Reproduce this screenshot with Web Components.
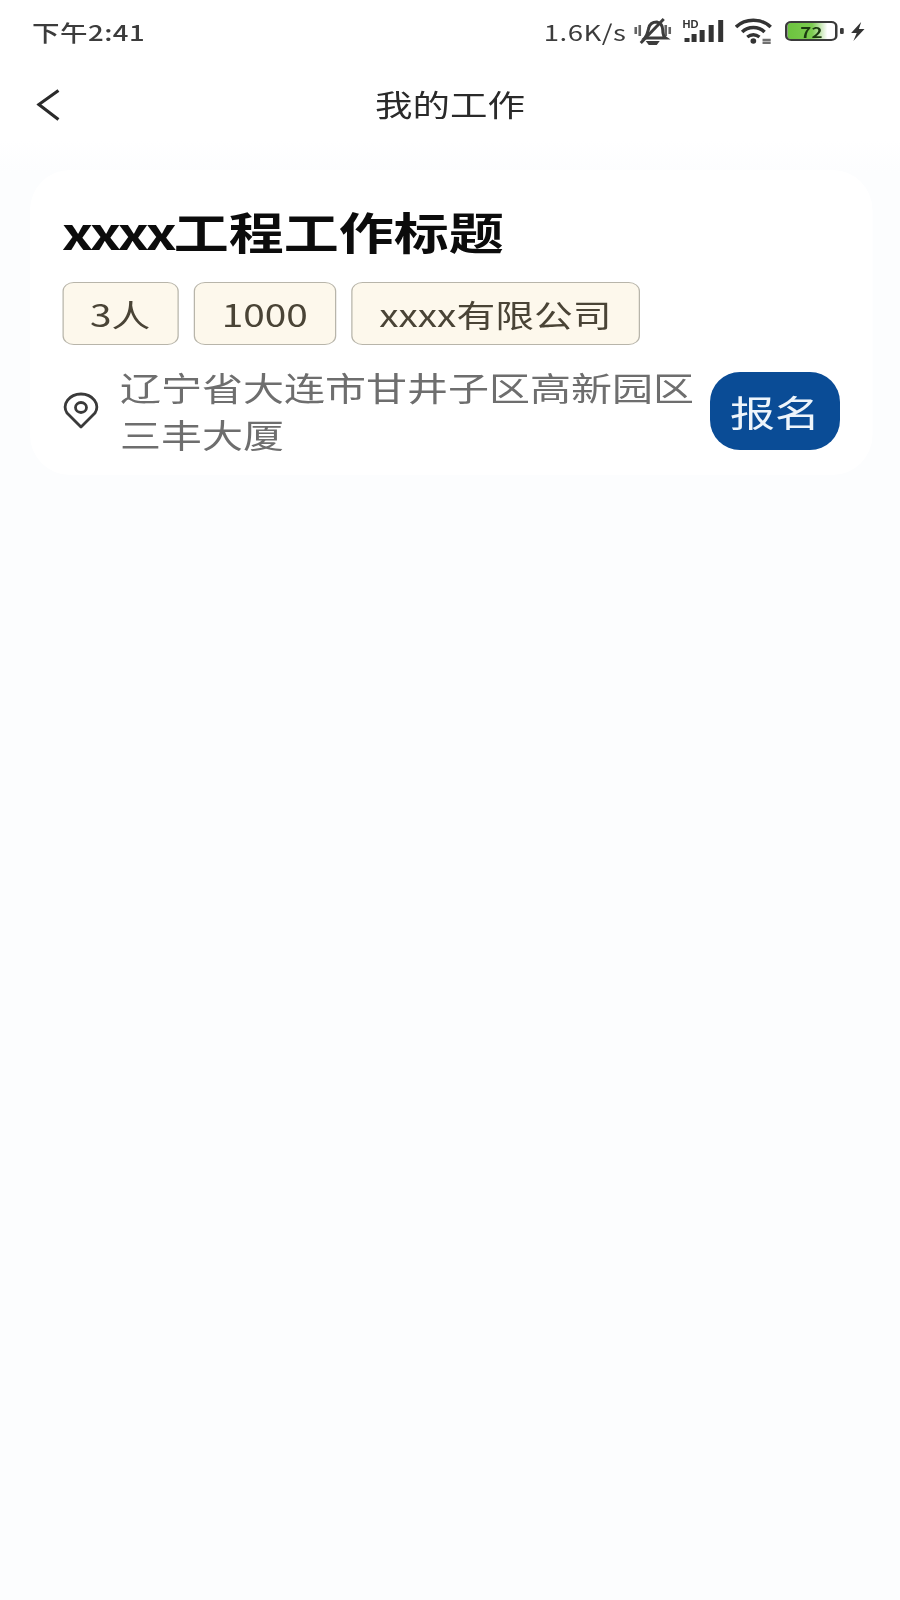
<!DOCTYPE html>
<html lang="zh">
<head>
<meta charset="utf-8">
<title>我的工作</title>
<style>
html, body { margin: 0; padding: 0; background: #fcfdfe; overflow: hidden; }
body { font-family: "Noto Sans CJK SC", "Noto Sans", sans-serif; }
</style>
</head>
<body>
<app-page>
    <status-bar></status-bar>
    <nav-bar>我的工作</nav-bar>
    <job-card address="辽宁省大连市甘井子区高新园区三丰大厦" action="报名">
        <span slot="title"><span style="letter-spacing:-2.4px">xxxx</span>工程工作标题</span>
        <job-tag>3人</job-tag>
        <job-tag>1000</job-tag>
        <job-tag>xxxx有限公司</job-tag>
    </job-card>
</app-page>

<script>
// the capture is stretched sideways and soft, so the page is laid out 720 wide and scaled to 900
class AppPage extends HTMLElement {
    constructor(){
        super();
        this.attachShadow({mode:'open'});
        this.shadowRoot.innerHTML = `
        <style>
        :host{
            display: block;
            width: 720px;
            height: 1600px;
            transform: scaleX(1.25);
            transform-origin: 0 0;
            filter: blur(.45px);
            background: linear-gradient(#fff 140px, #fcfdfe 172px);
        }
        </style>
        <slot></slot>`;
    }
}

class StatusBar extends HTMLElement {
    constructor(){
        super();
        this.attachShadow({mode:'open'});
        this.shadowRoot.innerHTML = `
        <style>
        :host{
            display: flex;
            align-items: center;
            justify-content: space-between;
            height: 61px;
            padding: 0 28px 0 25.6px;
            box-sizing: border-box;
            color: #3c3c3c;
            font-size: 22px;
        }
        .time{ font-weight: 500; letter-spacing: .4px; }
        .right{ display: flex; align-items: center; }
        .speed{ font-size: 22px; margin-right: 6px; letter-spacing: .4px; }
        svg{ display: block; flex: none; }
        .battery{
            box-sizing: border-box;
            width: 42px;
            height: 20px;
            border: 2.5px solid #3a3a3a;
            border-radius: 5px;
            margin: 1px 0 0 9.6px;
            display: flex;
            align-items: center;
            justify-content: center;
            font-size: 15px;
            line-height: 15px;
            font-weight: 700;
            color: #1c3a10;
            background: linear-gradient(90deg, #6cc43e 0, #7ccb50 52%, #d8eecb 74%, #fff 84%) content-box;
        }
        .nub{ width: 2.4px; height: 6px; background: #3a3a3a; margin: 1px 0 0 2px; border-radius: 1px; }
        </style>
        <span class="time">下午2:41</span>
        <div class="right">
            <span class="speed">1.6K/s</span>
            <svg width="30.4" height="28" viewBox="0 0 38 28" preserveAspectRatio="none" fill="none" stroke="#3c3c3c" stroke-width="3">
                <path d="M2 10v7M6 8v11M32 8v11M36 10v7" stroke-width="2.6" opacity=".8"/>
                <path d="M11 21c3-3 3-7 4-10 1-4 4-6 8-6 4 1 6 4 6 8 0 3 0 6 3 8z"/>
                <path d="M7 26 30 2"/>
                <path d="M12 24h14l-3 4h-8z" fill="#3c3c3c" stroke="none"/>
            </svg>
            <svg style="margin-left:8px" width="33" height="24" viewBox="0 0 41 24" preserveAspectRatio="none" fill="#333">
                <text x="0" y="9" font-family="Liberation Sans" font-size="11" font-weight="700">HD</text>
                <rect x="2" y="19" width="5" height="4"/>
                <rect x="9" y="15" width="5" height="8"/>
                <rect x="17" y="11" width="5" height="12"/>
                <rect x="26" y="6" width="5" height="17"/>
                <rect x="35.500" y="1" width="5" height="22"/>
            </svg>
            <svg style="margin-left:9px" width="31" height="26" viewBox="0 0 38 26" preserveAspectRatio="none" fill="none" stroke="#333" stroke-width="3.400">
                <path d="M1 9C10 0 26 0 35 9"/>
                <path d="M7 14c6-6 16-6 22 0"/>
                <path d="M12 19c4-3 8-3 12 0"/>
                <circle cx="18" cy="23" r="2.800" fill="#333" stroke="none"/>
                <path d="M27 22h8M27 25h8" stroke-width="2.400" opacity=".7"/>
            </svg>
            <div class="battery">72</div>
            <div class="nub"></div>
            <svg style="margin:2px 0 0 5px" width="12.500" height="19" viewBox="0 0 14 19" preserveAspectRatio="none" fill="#333">
                <path d="M10 0 1 11h5l-3 8 10-12H8z"/>
            </svg>
        </div>`;
    }
}

class NavBar extends HTMLElement {
    constructor(){
        super();
        this.attachShadow({mode:'open'});
        this.shadowRoot.innerHTML = `
        <style>
        :host{
            display: grid;
            grid-template-columns: 90px 1fr 90px;
            align-items: center;
            height: 84px;
            color: #2a2a2a;
            font-size: 30px;
        }
        .back{ padding: 4px 0 0 29px; display: flex; }
        .title{ text-align: center; }
        svg{ display: block; }
        </style>
        <div class="back">
            <svg width="19" height="32" viewBox="0 0 23 32" preserveAspectRatio="none" fill="none" stroke="#2a2a2a" stroke-width="3">
                <path d="M21.500 1.500 2.500 15.500 21.500 30.500"/>
            </svg>
        </div>
        <div class="title"><slot></slot></div>
        <div></div>`;
    }
}

class JobTag extends HTMLElement {
    constructor(){
        super();
        this.attachShadow({mode:'open'});
        this.shadowRoot.innerHTML = `
        <style>
        :host{
            display: flex;
            align-items: center;
            box-sizing: border-box;
            height: 63px;
            padding: 0 21.400px;
            border: 1.5px solid #b8b5aa;
            border-radius: 9px;
            background: #fdf8ec;
            color: #4a4436;
            font-size: 31px;
        }
        </style>
        <slot></slot>`;
    }
}

class JobCard extends HTMLElement {
    constructor(){
        super();
        this.attachShadow({mode:'open'});
        this.shadowRoot.innerHTML = `
        <style>
        :host{
            display: block;
            box-sizing: border-box;
            margin: 25px 22.400px 0 24px;
            height: 305px;
            padding: 31px 25.600px 0;
            background: #fff;
            border-radius: 32px / 40px;
        }
        .title{
            font-size: 44px;
            line-height: 60px;
            font-weight: 700;
            color: #0c0c0c;
        }
        .tags{ display: flex; gap: 12.400px; margin-top: 21px; }
        .row{ display: flex; align-items: center; margin-top: 17.500px; }
        .pin{ display: block; flex: none; margin: 2px 16.800px 0 0; }
        .address{
            flex: 1;
            font-size: 32.800px;
            line-height: 47px;
            color: #6e6e6e;
        }
        .action{
            flex: none;
            display: flex;
            align-items: center;
            justify-content: center;
            width: 104px;
            height: 78px;
            margin: 3px 0 0 12px;
            border-radius: 24px / 30px;
            background: #0a4c96;
            color: #eef5fb;
            font-size: 36px;
        }
        </style>
        <div class="title"><slot name="title"></slot></div>
        <div class="tags"><slot></slot></div>
        <div class="row">
            <svg class="pin" width="29.600" height="37" viewBox="0 0 37 37" preserveAspectRatio="none" fill="none" stroke="#3a3a3a" stroke-width="2.800">
                <path d="M18.500 35 4.500 21C-1 12 7 2 18.500 2S38 12 32.500 21z" stroke-linejoin="round"/>
                <ellipse cx="18.500" cy="15.500" rx="5.500" ry="5"/>
            </svg>
            <div class="address"></div>
            <div class="action"></div>
        </div>`;
    }
    connectedCallback(){
        this.shadowRoot.querySelector('.address').textContent = this.getAttribute('address');
        this.shadowRoot.querySelector('.action').textContent = this.getAttribute('action');
    }
}

window.customElements.define('app-page', AppPage);
window.customElements.define('status-bar', StatusBar);
window.customElements.define('nav-bar', NavBar);
window.customElements.define('job-tag', JobTag);
window.customElements.define('job-card', JobCard);
</script>
</body>
</html>
